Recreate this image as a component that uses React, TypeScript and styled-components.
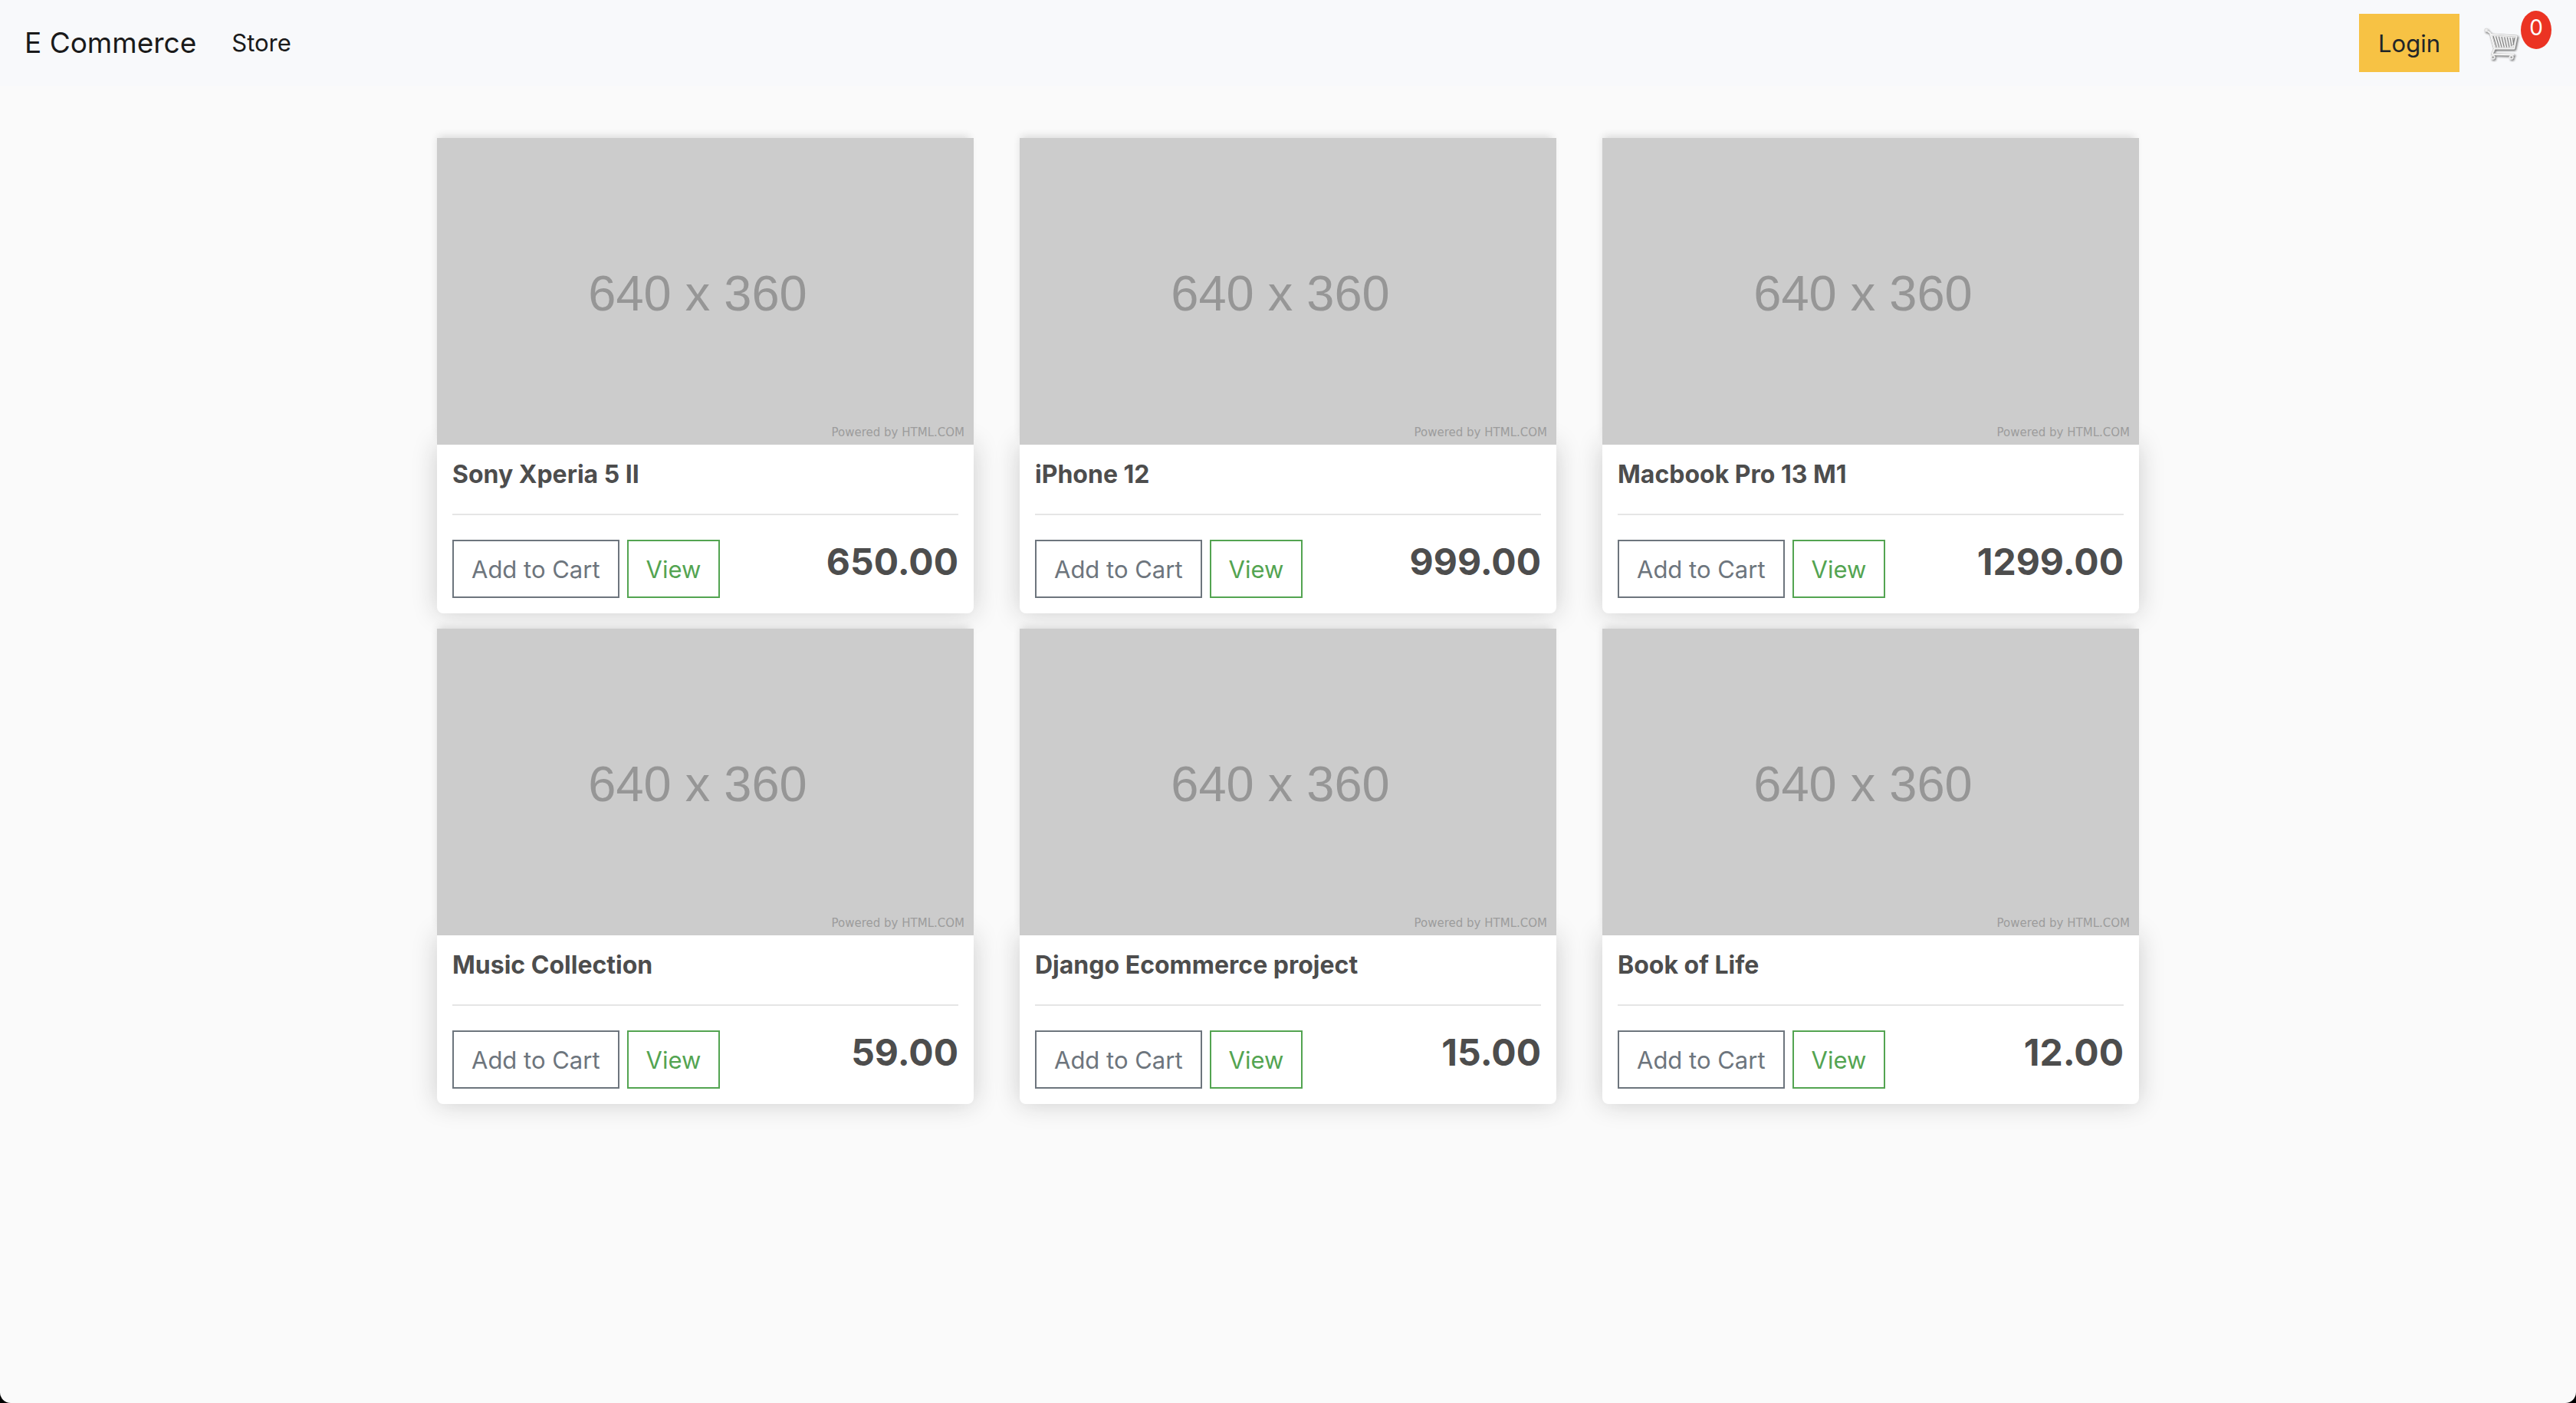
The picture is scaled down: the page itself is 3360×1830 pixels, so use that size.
import React from "react";
import styled, { createGlobalStyle } from "styled-components";

const GlobalStyle = createGlobalStyle`
  *, *::before, *::after { box-sizing: border-box; }
  html { background: #000; }
  body {
    margin: 0;
    font-family: Inter, "Liberation Sans", sans-serif;
    font-size: 31px;
    line-height: 48px;
    color: #212529;
  }
`;

const Page = styled.div`
  min-height: 100vh;
  background: #fafafa;
  border-radius: 0 0 14px 14px;
`;

const Navbar = styled.nav`
  display: flex;
  align-items: center;
  min-height: 112px;
  padding: 0 32px;
  background: #f8f9fb;
`;

const Brand = styled.a`
  margin-right: 46px;
  font-size: 37px;
  color: #1a1a1a;
  text-decoration: none;
`;

const NavLink = styled.a`
  margin-right: auto;
  color: #1a1a1a;
  text-decoration: none;
`;

const Button = styled.button<{ $color: string; $fill?: string }>`
  height: 76px;
  padding: 2px 23px 0;
  border: 2px solid ${(p) => p.$fill ?? p.$color};
  border-radius: 0;
  background: ${(p) => p.$fill ?? "transparent"};
  color: ${(p) => p.$color};
  font: inherit;
  white-space: nowrap;
  cursor: pointer;
`;

const CartLink = styled.a`
  display: flex;
  align-self: stretch;
  align-items: center;
  margin-left: 30px;
  text-decoration: none;
`;

const CartCount = styled.span`
  align-self: flex-start;
  width: 40px;
  height: 50px;
  margin-top: 14px;
  border-radius: 50%;
  background: #eb3323;
  color: #fff;
  font-size: 28px;
  line-height: 44px;
  text-align: center;
`;

const Products = styled.main`
  display: grid;
  grid-template-columns: repeat(3, 1fr);
  gap: 20px 60px;
  max-width: 2280px;
  margin: 0 auto;
  padding: 68px 30px;
`;

const Product = styled.article`
  display: flex;
  flex-direction: column;
`;

const Thumbnail = styled.div`
  position: relative;
  z-index: 1;
  display: grid;
  height: 400px;
  background: #ccc;
  box-shadow: -2px -6px 10px -4px #d6d6d6;
  > * { grid-area: 1 / 1; }
`;

const ThumbnailSize = styled.span`
  place-self: center;
  padding: 6px 20px 0 0;
  color: #969696;
  font-family: "Liberation Sans", Arial, sans-serif;
  font-size: 65px;
  line-height: 80px;
`;

const ThumbnailCredit = styled.span`
  place-self: end;
  padding: 0 12px 6px 0;
  color: #9c9c9c;
  font-family: "DejaVu Sans", sans-serif;
  font-size: 15px;
  line-height: 20px;
`;

const Details = styled.div`
  padding: 20px;
  border-radius: 0 0 8px 8px;
  background: #fff;
  box-shadow: 0 0 32px #ccc;
`;

const Title = styled.h2`
  margin: 0;
  color: #4d4d4d;
  font-size: 32px;
  font-weight: 700;
  line-height: 38px;
`;

const Divider = styled.hr`
  margin: 32px 0;
  border: 0;
  border-top: 2px solid #e5e5e5;
`;

const Actions = styled.div`
  display: flex;
  align-items: flex-start;
  gap: 10px;
`;

const Price = styled.strong`
  margin-left: auto;
  color: #4d4d4d;
  font-size: 48px;
  font-weight: 700;
  line-height: 58px;
`;

const products = [
  { name: "Sony Xperia 5 II", price: "650.00" },
  { name: "iPhone 12", price: "999.00" },
  { name: "Macbook Pro 13 M1", price: "1299.00" },
  { name: "Music Collection", price: "59.00" },
  { name: "Django Ecommerce project", price: "15.00" },
  { name: "Book of Life", price: "12.00" },
];

function CartIcon() {
  return (
    <svg width="50" height="50" viewBox="24 63 150 150" fill="none" aria-hidden="true">
      <defs>
        <filter id="cart-shadow" x="-20%" y="-20%" width="150%" height="150%">
          <feDropShadow dx="4" dy="5" stdDeviation="3" floodColor="#222" floodOpacity="0.65" />
        </filter>
      </defs>
      <g filter="url(#cart-shadow)" strokeLinecap="round" strokeLinejoin="round">
        <path d="M58 104 L158 111 L148 160 L71 160 Z" fill="#ececec" />
        <path d="M40 89 L54 99 L71 160 L61 182 L146 184" stroke="#b0b0b0" strokeWidth="8" />
        <path d="M58 104 L158 111 L148 160 L71 160 Z" stroke="#b0b0b0" strokeWidth="7" />
        <path d="M40 89 L54 99 L71 160 L61 182 L146 184" stroke="#f4f4f4" strokeWidth="6" />
        <path d="M58 104 L158 111 L148 160 L71 160 Z" stroke="#f4f4f4" strokeWidth="5" />
        <circle cx="39" cy="88" r="7" fill="#eee" stroke="#c0c0c0" strokeWidth="1.5" />
        <circle cx="65" cy="194" r="6" fill="#909090" stroke="#ececec" strokeWidth="5" />
        <circle cx="137" cy="194" r="6" fill="#909090" stroke="#ececec" strokeWidth="5" />
      </g>
      <path
        d="M66 111 L79 155 M77 112 L89 155 M88 113 L99 155 M99 114 L109 155 M110 115 L119 155 M121 116 L129 155 M132 117 L138 151 M143 117 L145 137 M150 117 L144 147"
        stroke="#808080"
        strokeWidth="3.5"
      />
    </svg>
  );
}

export default function App() {
  return (
    <>
      <GlobalStyle />
      <Page>
        <Navbar>
          <Brand href="#">E Commerce</Brand>
          <NavLink href="#">Store</NavLink>
          <Button $color="#212529" $fill="#f7c244">Login</Button>
          <CartLink href="#" aria-label="Cart">
            <CartIcon />
            <CartCount>0</CartCount>
          </CartLink>
        </Navbar>
        <Products>
          {products.map((product) => (
            <Product key={product.name}>
              <Thumbnail>
                <ThumbnailSize>640 x 360</ThumbnailSize>
                <ThumbnailCredit>Powered by HTML.COM</ThumbnailCredit>
              </Thumbnail>
              <Details>
                <Title>{product.name}</Title>
                <Divider />
                <Actions>
                  <Button $color="#6d757d">Add to Cart</Button>
                  <Button $color="#53a451">View</Button>
                  <Price>{product.price}</Price>
                </Actions>
              </Details>
            </Product>
          ))}
        </Products>
      </Page>
    </>
  );
}
